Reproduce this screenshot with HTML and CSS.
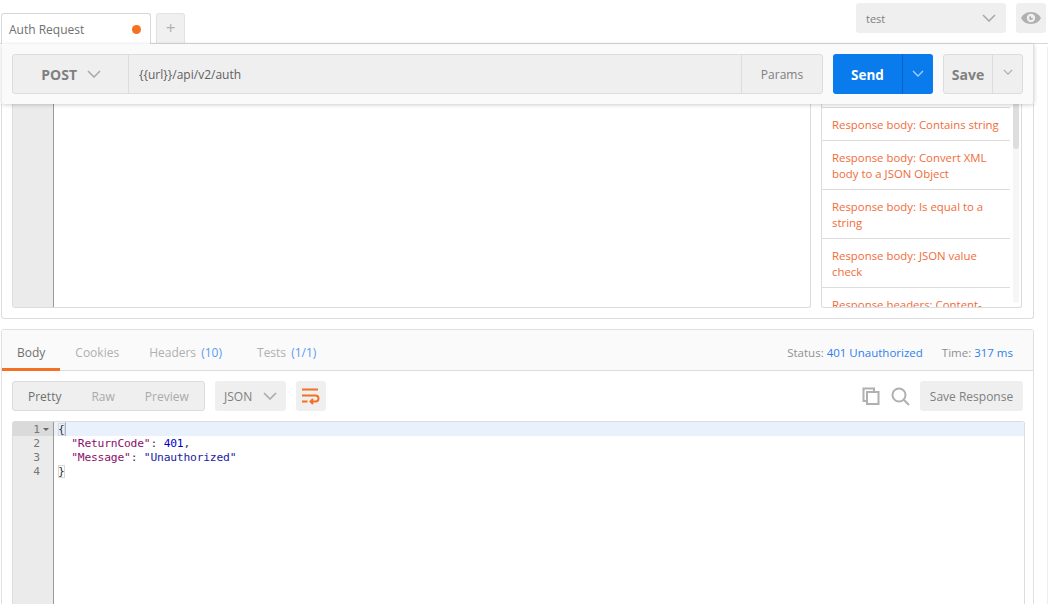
FILE: index.html
```html
<!DOCTYPE html>
<html lang="en">
<head>
<meta charset="utf-8">
<title>Auth Request</title>
<link rel="stylesheet" href="styles.css">
</head>
<body>
<header class="topbar">
  <div class="tabs">
    <div class="tab"><span class="tab-name">Auth Request</span><span class="dot"></span></div>
    <div class="tab-add">+</div>
  </div>
  <div class="env">
    <div class="env-select"><span>test</span>
      <svg class="chev-lg" viewBox="0 0 14 8"><path d="M1 1l6 6 6-6"/></svg>
    </div>
    <div class="eye-btn">
      <svg width="22" height="14" viewBox="0 0 22 14"><path class="eye" fill-rule="evenodd" d="M11 1C6 1 2.500 4 1 7c1.500 3 5 6 10 6s8.500-3 10-6c-1.500-3-5-6-10-6zm0 1.800a4.200 4.200 0 1 1 0 8.400 4.200 4.200 0 0 1 0-8.400zM11 5a2 2 0 1 0 2 2h-2z"/></svg>
    </div>
  </div>
</header>

<section class="urlbar">
  <div class="url-group">
    <div class="method"><span>POST</span><svg class="chev-lg" viewBox="0 0 14 8"><path d="M1 1l6 6 6-6"/></svg></div>
    <div class="url">{{url}}/api/v2/auth</div>
    <div class="params">Params</div>
  </div>
  <div class="send">
    <div class="send-main">Send</div>
    <div class="send-more"><svg class="chev-sm" viewBox="0 0 12 7"><path d="M1 1l5 5 5-5"/></svg></div>
  </div>
  <div class="save">
    <div class="save-main">Save</div>
    <div class="save-more"><svg class="chev-sm" viewBox="0 0 12 7"><path d="M1 1l5 5 5-5"/></svg></div>
  </div>
</section>

<section class="request">
  <div class="script-editor"><div class="gutter"></div></div>
  <div class="snippets">
    <ul class="snippet-list">
      <li class="snippet snippet-clip"></li>
      <li class="snippet">Response body: Contains string</li>
      <li class="snippet">Response body: Convert XML body to a JSON Object</li>
      <li class="snippet">Response body: Is equal to a string</li>
      <li class="snippet">Response body: JSON value check</li>
      <li class="snippet">Response headers: Content-Type header check</li>
    </ul>
    <div class="scroll-track"><div class="scroll-thumb"></div></div>
  </div>
</section>

<section class="response">
  <div class="res-tabs">
    <div class="res-tab active">Body</div>
    <div class="res-tab">Cookies</div>
    <div class="res-tab res-tab-wide">Headers <b>(10)</b></div>
    <div class="res-tab">Tests <b>(1/1)</b></div>
    <div class="res-meta">
      <span>Status: <b>401 Unauthorized</b></span>
      <span>Time: <b>317 ms</b></span>
    </div>
  </div>
  <div class="res-tools">
    <div class="modes">
      <span class="mode on">Pretty</span><span class="mode">Raw</span><span class="mode">Preview</span>
    </div>
    <div class="lang"><span>JSON</span><svg class="chev-lg" viewBox="0 0 14 8"><path d="M1 1l6 6 6-6"/></svg></div>
    <div class="wrap-btn">
      <svg width="18" height="17" viewBox="0 0 18 17"><path class="wrap" d="M0 1.500h16M0 7.500h13.500a3 3 0 0 1 0 6H8.500M0 13.500h5.500M11 11l-2.500 2.500 2.500 2.500"/></svg>
    </div>
    <div class="res-actions">
      <svg width="18" height="18" viewBox="0 0 18 18"><path class="tool-line" d="M4 14H1.500V1.500H12V4M5 5h11.500v12H5z"/></svg>
      <svg width="19" height="19" viewBox="0 0 19 19"><circle class="tool-line" cx="8" cy="8" r="6.500"/><path class="tool-line" d="M12.500 12.500L18 18"/></svg>
      <div class="save-res">Save Response</div>
    </div>
  </div>
  <div class="code">
    <div class="code-gutter">
      <div class="ln ln-active">1<i class="fold"></i></div>
      <div class="ln">2</div>
      <div class="ln">3</div>
      <div class="ln">4</div>
    </div>
    <div class="code-body">
      <div class="cl cl-active"><span class="brace">{</span><span class="caret"></span></div>
      <div class="cl">  <span class="k">"ReturnCode"</span>: <span class="n">401</span>,</div>
      <div class="cl">  <span class="k">"Message"</span>: <span class="s">"Unauthorized"</span></div>
      <div class="cl"><span class="brace">}</span></div>
    </div>
  </div>
</section>
</body>
</html>
```
FILE: styles.css
```css
* { box-sizing: border-box; }
html, body { height: 100%; }
body {
  margin: 0;
  height: 604px;
  overflow: hidden;
  background: #fff linear-gradient(#eeeeee, #eeeeee) no-repeat 1047px 47px / 1px 557px;
  font-family: "Open Sans", sans-serif;
  font-size: 12px;
  color: #808080;
}
svg { display: block; fill: none; }
.chev-lg { width: 14px; height: 8px; }
.chev-lg path { stroke: #aaa; stroke-width: 1.6; fill: none; }
.chev-sm { width: 12px; height: 7px; }
.chev-sm path { stroke: #aaa; stroke-width: 1.4; fill: none; }

/* top bar */
.topbar {
  height: 44px;
  display: flex;
  justify-content: space-between;
  border-bottom: 1px solid #d8d8d8;
  padding: 3px 2px 0 1px;
}
.tabs { display: flex; align-items: flex-end; gap: 5px; margin-bottom: -1px; }
.tab {
  width: 150px;
  height: 31px;
  display: flex;
  align-items: center;
  justify-content: space-between;
  padding: 0 9px 0 7px;
  background: #fff;
  border: 1px solid #d8d8d8;
  border-bottom: 0;
  border-radius: 3px 3px 0 0;
}
.tab-name { color: #707070; font-size: 12px; }
.dot { width: 9px; height: 9px; border-radius: 50%; background: #f47023; }
.tab-add {
  width: 29px;
  height: 30px;
  margin-bottom: 1px;
  background: #f0f0f0;
  border: 1px solid #e2e2e2;
  border-bottom: 0;
  border-radius: 3px 3px 0 0;
  text-align: center;
  font-size: 17px;
  line-height: 28px;
  color: #b0b0b0;
}
.env { display: flex; gap: 10px; }
.env-select {
  width: 150px;
  height: 30px;
  display: flex;
  align-items: center;
  justify-content: space-between;
  padding: 0 10px;
  background: #efefef;
  border-radius: 3px;
  font-size: 11px;
  color: #808080;
}
.eye-btn {
  width: 30px;
  height: 30px;
  display: flex;
  align-items: center;
  justify-content: center;
  background: #efefef;
  border-radius: 3px;
}
.eye { fill: #b0b0b0; }

/* url bar */
.urlbar {
  position: relative;
  z-index: 2;
  width: 1032px;
  height: 60px;
  margin-left: 2px;
  padding: 10px 10px 0;
  display: flex;
  background: #fafafa;
  border-radius: 0 0 3px 3px;
  border-right: 1px solid #e0e0e0;
  box-shadow: 0 1px 4px rgba(0,0,0,.2);
}
.url-group {
  width: 811px;
  height: 40px;
  display: flex;
  background: #efefef;
  border: 1px solid #dcdcdc;
  border-radius: 3px;
}
.method {
  width: 116px;
  display: flex;
  align-items: center;
  justify-content: flex-end;
  gap: 10px;
  padding-right: 27px;
  border-right: 1px solid #dcdcdc;
  font-weight: 700;
  font-size: 14px;
  color: #808080;
}
.url { flex: 1; line-height: 39px; padding-left: 10px; font-size: 12px; color: #606060; }
.params {
  width: 81px;
  text-align: center;
  line-height: 39px;
  font-size: 12px;
  border-left: 1px solid #dcdcdc;
  color: #808080;
}
.send {
  width: 100px;
  height: 40px;
  margin-left: 10px;
  display: flex;
  background: #097bed;
  border-radius: 3px;
}
.send-main {
  width: 70px;
  text-align: center;
  line-height: 42px;
  font-weight: 700;
  font-size: 13.500px;
  color: #fff;
  border-right: 1px solid #0a62bb;
}
.send-more { flex: 1; display: flex; align-items: center; justify-content: center; padding-bottom: 2px; }
.send-more path { stroke: #a8cdf5; }
.save {
  width: 80px;
  height: 40px;
  margin-left: 10px;
  display: flex;
  background: #efefef;
  border: 1px solid #dcdcdc;
  border-radius: 3px;
}
.save-main {
  width: 49px;
  text-align: center;
  line-height: 40px;
  font-weight: 700;
  font-size: 14px;
  color: #808080;
  border-right: 1px solid #dcdcdc;
}
.save-more { flex: 1; display: flex; align-items: center; justify-content: center; padding-bottom: 4px; }
.save-more svg { width: 10px; height: 6px; }

/* request */
.request {
  height: 215px;
  margin-left: 1px;
  width: 1033px;
  display: flex;
  padding: 0 10px 10px;
  gap: 10px;
  border: 1px solid #dcdcdc;
  border-top: 0;
  border-radius: 0 0 3px 3px;
}
.script-editor {
  width: 799px;
  display: flex;
  border: 1px solid #dcdcdc;
  border-top: 0;
  border-radius: 0 0 3px 3px;
}
.gutter { width: 41px; background: #ebebeb; border-right: 1px solid #999; }
.snippets {
  width: 201px;
  display: flex;
  border: 1px solid #dcdcdc;
  border-top: 0;
  border-radius: 0 0 3px 3px;
  overflow: hidden;
}
.snippet-list { width: 188px; margin: 0; padding: 0; list-style: none; overflow: hidden; }
.snippet {
  padding: 9px 10px 7px;
  border-bottom: 1px solid #dcdcdc;
  font-size: 11.400px;
  line-height: 16px;
  color: #f26b3a;
}
.snippet-clip { height: 4px; padding: 0; }
.scroll-track { width: 6px; height: 199px; margin-left: 3px; background: #f6f6f6; border-radius: 0 0 3px 3px; }
.scroll-thumb { width: 100%; height: 45px; background: #dedede; border-radius: 0 0 3px 3px; }

/* response */
.response {
  width: 1033px;
  margin: 10px 0 0 1px;
  border: 1px solid #e0e0e0;
  border-bottom: 0;
  border-radius: 3px 3px 0 0;
  height: 275px;
}
.res-tabs {
  height: 41px;
  display: flex;
  align-items: stretch;
  background: #fafafa;
  border-bottom: 1px solid #dcdcdc;
  font-size: 12px;
}
.res-tab {
  padding: 0 15px;
  line-height: 46px;
  height: 41px;
  color: #b0b0b0;
}
.res-tab b { font-weight: 400; color: #5a9bf0; margin-left: 2px; }
.res-tab.active { color: #707070; border-bottom: 3px solid #f47023; margin-bottom: -1px; }
.res-tab-wide { padding-right: 20px; }
.res-meta {
  margin-left: auto;
  display: flex;
  gap: 19px;
  padding-right: 20px;
  line-height: 46px;
  font-size: 11.500px;
  color: #909090;
}
.res-meta b { font-weight: 400; color: #2f7fee; }
.res-tools {
  display: flex;
  align-items: center;
  height: 30px;
  margin: 10px 0;
  padding: 0 10px;
}
.modes {
  width: 193px;
  height: 30px;
  display: flex;
  align-items: center;
  padding-left: 15px;
  gap: 30px;
  background: #efefef;
  border: 1px solid #dcdcdc;
  border-radius: 3px;
  font-size: 12px;
  color: #b0b0b0;
}
.mode { color: #aaa; }
.mode.on { color: #707070; }
.lang {
  width: 71px;
  height: 30px;
  margin-left: 10px;
  display: flex;
  align-items: center;
  justify-content: space-between;
  padding: 0 9px;
  background: #efefef;
  border-radius: 3px;
  font-size: 12px;
  color: #808080;
}
.wrap-btn {
  width: 30px;
  height: 30px;
  margin-left: 10px;
  display: flex;
  align-items: center;
  justify-content: center;
  background: #efefef;
  border-radius: 3px;
}
.wrap { stroke: #f47023; stroke-width: 2; fill: none; }
.res-actions { margin-left: auto; display: flex; align-items: center; gap: 11px; }
.tool-line { stroke: #b0b0b0; stroke-width: 2; fill: none; }
.save-res {
  width: 103px;
  height: 30px;
  margin-left: -1px;
  text-align: center;
  line-height: 32px;
  background: #efefef;
  border-radius: 3px;
  font-size: 12px;
  color: #808080;
}
.code {
  display: flex;
  height: 184px;
  margin: 0 8px 0 10px;
  border: 1px solid #dcdcdc;
  border-bottom: 0;
  border-radius: 3px 3px 0 0;
  font-family: "DejaVu Sans Mono", monospace;
  font-size: 11.300px;
  line-height: 16px;
}
.code-gutter { width: 41px; background: #ebebeb; border-right: 1px solid #999; color: #777; }
.ln { height: 14px; text-align: right; padding-right: 13px; position: relative; }
.ln-active { background: #dadada; }
.fold {
  position: absolute;
  right: 4px;
  top: 6px;
  border: 3px solid transparent;
  border-top: 3px solid #666;
  border-bottom: 0;
}
.code-body { flex: 1; padding-left: 4px; color: #333; letter-spacing: -0.2px; }
.cl { height: 14px; white-space: pre; }
.cl-active { background: #e8f1fc; margin-left: -4px; padding-left: 4px; }
.brace { outline: 1px solid #d8d8d8; outline-offset: -1px; }
.caret { display: inline-block; width: 1px; height: 14px; background: #a8b8c8; vertical-align: top; }
.k { color: #8a0f6a; }
.n { color: #0000cd; }
.s { color: #1a1aa6; }
```
